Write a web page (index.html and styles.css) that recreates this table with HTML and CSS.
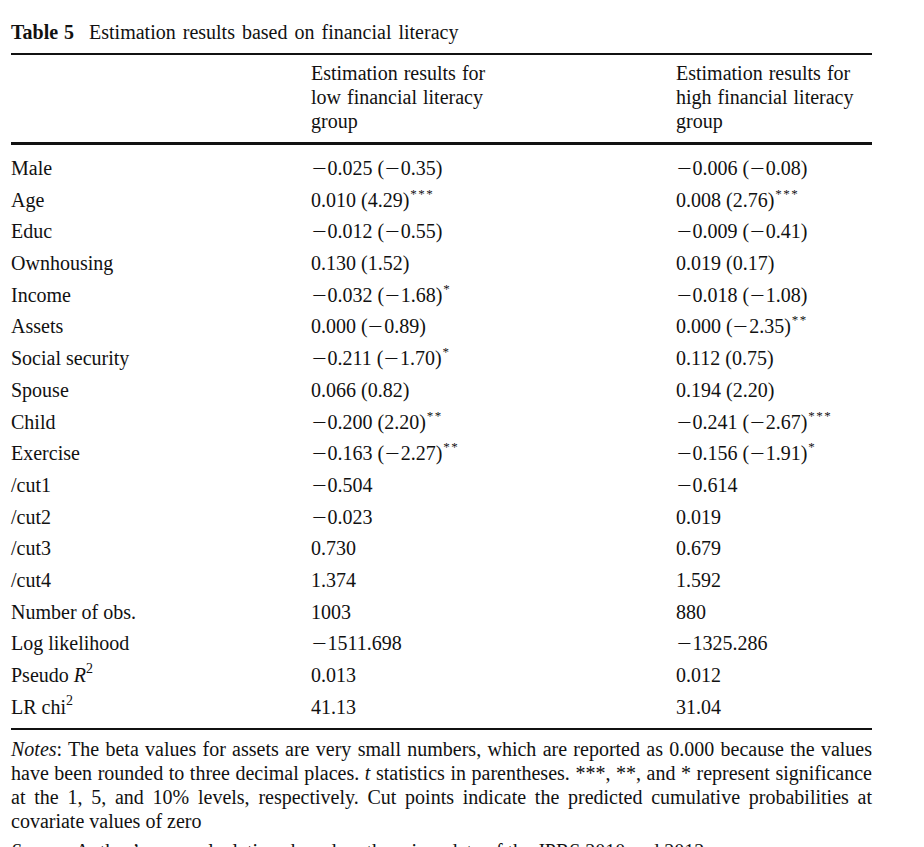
FILE: index.html
```html
<!DOCTYPE html>
<html lang="en">
<head>
<meta charset="utf-8">
<title>Table 5</title>
<link rel="stylesheet" href="styles.css">
</head>
<body>
<div class="page">
  <h1 class="title"><b class="label">Table 5</b>Estimation results based on financial literacy</h1>
  <div class="table">
    <div class="thead grid">
      <div></div>
      <div class="h">Estimation results for<br>low financial literacy<br>group</div>
      <div class="h">Estimation results for<br>high financial literacy<br>group</div>
    </div>
    <div class="tbody">
      <div class="row grid"><div>Male</div><div><span class="neg">−</span>0.025 (<span class="neg">−</span>0.35)</div><div><span class="neg">−</span>0.006 (<span class="neg">−</span>0.08)</div></div>
      <div class="row grid"><div>Age</div><div>0.010 (4.29)<sup class="sig">***</sup></div><div>0.008 (2.76)<sup class="sig">***</sup></div></div>
      <div class="row grid"><div>Educ</div><div><span class="neg">−</span>0.012 (<span class="neg">−</span>0.55)</div><div><span class="neg">−</span>0.009 (<span class="neg">−</span>0.41)</div></div>
      <div class="row grid"><div>Ownhousing</div><div>0.130 (1.52)</div><div>0.019 (0.17)</div></div>
      <div class="row grid"><div>Income</div><div><span class="neg">−</span>0.032 (<span class="neg">−</span>1.68)<sup class="sig">*</sup></div><div><span class="neg">−</span>0.018 (<span class="neg">−</span>1.08)</div></div>
      <div class="row grid"><div>Assets</div><div>0.000 (<span class="neg">−</span>0.89)</div><div>0.000 (<span class="neg">−</span>2.35)<sup class="sig">**</sup></div></div>
      <div class="row grid"><div>Social security</div><div><span class="neg">−</span>0.211 (<span class="neg">−</span>1.70)<sup class="sig">*</sup></div><div>0.112 (0.75)</div></div>
      <div class="row grid"><div>Spouse</div><div>0.066 (0.82)</div><div>0.194 (2.20)</div></div>
      <div class="row grid"><div>Child</div><div><span class="neg">−</span>0.200 (2.20)<sup class="sig">**</sup></div><div><span class="neg">−</span>0.241 (<span class="neg">−</span>2.67)<sup class="sig">***</sup></div></div>
      <div class="row grid"><div>Exercise</div><div><span class="neg">−</span>0.163 (<span class="neg">−</span>2.27)<sup class="sig">**</sup></div><div><span class="neg">−</span>0.156 (<span class="neg">−</span>1.91)<sup class="sig">*</sup></div></div>
      <div class="row grid"><div>/cut1</div><div><span class="neg">−</span>0.504</div><div><span class="neg">−</span>0.614</div></div>
      <div class="row grid"><div>/cut2</div><div><span class="neg">−</span>0.023</div><div>0.019</div></div>
      <div class="row grid"><div>/cut3</div><div>0.730</div><div>0.679</div></div>
      <div class="row grid"><div>/cut4</div><div>1.374</div><div>1.592</div></div>
      <div class="row grid"><div>Number of obs.</div><div>1003</div><div>880</div></div>
      <div class="row grid"><div>Log likelihood</div><div><span class="neg">−</span>1511.698</div><div><span class="neg">−</span>1325.286</div></div>
      <div class="row grid"><div>Pseudo <i>R</i><sup class="pow">2</sup></div><div>0.013</div><div>0.012</div></div>
      <div class="row grid"><div>LR chi<sup class="pow">2</sup></div><div>41.13</div><div>31.04</div></div>
    </div>
  </div>
  <div class="notes">
    <span class="jl"><i>Notes</i>: The beta values for assets are very small numbers, which are reported as 0.000 because the values</span>
    <span class="jl">have been rounded to three decimal places. <i>t</i> statistics in parentheses. ***, **, and * represent significance</span>
    <span class="jl">at the 1, 5, and 10% levels, respectively. Cut points indicate the predicted cumulative probabilities at</span>
    <span class="last">covariate values of zero</span>
  </div>
  <p class="source"><i>Source</i>: Author’s own calculations based on the micro data of the JPRS 2010 and 2012</p>
</div>
</body>
</html>
```

FILE: styles.css
```css
html, body {
  margin: 0;
  padding: 0;
  background: #ffffff;
  overflow: hidden;
}

.page {
  width: 861px;
  padding: 20px 0 0 11px;
  font-family: "Liberation Serif", "Times New Roman", serif;
  font-size: 20px;
  color: #111111;
}

.title {
  margin: 0 0 9px 0;
  font-size: 20px;
  font-weight: normal;
  line-height: 24px;
  word-spacing: 2px;
}

.label {
  font-weight: bold;
  margin-right: 15px;
  word-spacing: 1px;
}

.table {
  border-top: 2px solid #111111;
  border-bottom: 2px solid #111111;
}

.grid {
  display: grid;
  grid-template-columns: 300px 365px 1fr;
}

.thead {
  padding: 6px 0 9px 0;
  line-height: 24px;
  border-bottom: 3px solid #111111;
}

.thead .h {
  word-spacing: 1px;
}

.tbody {
  padding: 8px 0 5px 0;
}

.row {
  height: 31.7px;
  line-height: 31.7px;
  white-space: nowrap;
}

.neg {
  display: inline-block;
  width: 16px;
  margin-left: 0.5px;
  transform: scaleX(1.3);
  transform-origin: left center;
}

.sig {
  font-size: 13px;
  line-height: 0;
  letter-spacing: 1.5px;
  vertical-align: 9px;
  margin-left: 1px;
}

.pow {
  font-size: 14px;
  line-height: 0;
  vertical-align: 9px;
}

.notes {
  padding-top: 7px;
  line-height: 24px;
}

.notes .jl {
  display: block;
  white-space: nowrap;
  text-align: justify;
  text-align-last: justify;
}

.notes .last {
  display: block;
}

.source {
  margin: 6px 0 0 0;
  line-height: 24px;
}
```
